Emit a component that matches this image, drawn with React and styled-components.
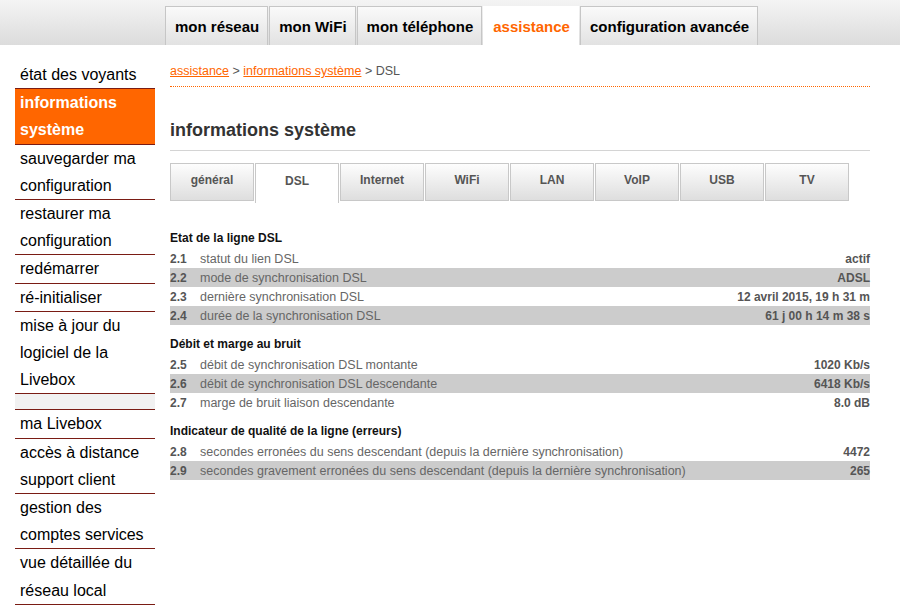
import React from 'react'
import styled, { createGlobalStyle } from 'styled-components'

const Global = createGlobalStyle`
  body {
    margin: 0;
    background: #fff;
    font-family: "Liberation Sans", Arial, sans-serif;
  }
`

const TopBar = styled.div`
  height: 45px;
  background: linear-gradient(#f4f4f4, #dcdcdc);
  display: flex;
  align-items: flex-end;
  padding-left: 165px;
`

const TopTab = styled.div`
  height: 38px;
  margin-right: 1px;
  padding: 0 8px 0 9px;
  display: flex;
  align-items: center;
  font-size: 15px;
  font-weight: bold;
  color: ${p => (p.$active ? '#ff6600' : '#000')};
  background: ${p => (p.$active ? '#fff' : 'linear-gradient(#fafafa, #e2e2e2)')};
  border: 1px solid ${p => (p.$active ? '#fff' : '#c6c6c6')};
  border-bottom: none;
`

const Body = styled.div`
  display: flex;
  align-items: flex-start;
  padding: 16px 0 0 15px;
`

const Side = styled.div`
  width: 140px;
  flex-shrink: 0;
`

const SideItem = styled.div`
  padding-left: 5px;
  font-size: 16px;
  line-height: 27.2px;
  color: ${p => (p.$active ? '#fff' : '#000')};
  font-weight: ${p => (p.$active ? 'bold' : 'normal')};
  background: ${p => (p.$active ? '#ff6600' : '#fff')};
  border-bottom: 1px solid #7a1c14;
`

const SideGap = styled.div`
  height: 15px;
  background: #f1f1f1;
  border-bottom: 1px solid #7a1c14;
`

const Main = styled.div`
  width: 700px;
  margin-left: 15px;
`

const Crumbs = styled.div`
  margin-top: 3px;
  font-size: 12.5px;
  color: #555;
  padding-bottom: 8px;
  border-bottom: 1px dotted #ff6600;
  a {
    color: #ff6600;
    text-decoration: underline;
  }
`

const Title = styled.h1`
  margin: 33px 0 0;
  padding-bottom: 9px;
  font-size: 18px;
  font-weight: bold;
  color: #333;
  border-bottom: 1px solid #d4d4d4;
`

const SubTabs = styled.div`
  display: flex;
  align-items: flex-start;
  margin-top: 12px;
`

const SubTab = styled.div`
  box-sizing: border-box;
  width: 84px;
  height: ${p => (p.$active ? '40px' : '38px')};
  margin-right: 1px;
  display: flex;
  align-items: center;
  justify-content: center;
  padding-bottom: ${p => (p.$active ? '6px' : '4px')};
  font-size: 12px;
  font-weight: bold;
  color: #555;
  border: 1px solid #c8c8c8;
  border-bottom: ${p => (p.$active ? 'none' : '1px solid #c8c8c8')};
  background: ${p => (p.$active ? '#fff' : 'linear-gradient(#fdfdfd, #dedede)')};
`

const Section = styled.div`
  margin-top: ${p => (p.$first ? '25px' : '9px')};
`

const SectionTitle = styled.div`
  font-size: 12px;
  font-weight: bold;
  color: #111;
  line-height: 21px;
`

const Row = styled.div`
  display: flex;
  align-items: center;
  height: 19px;
  font-size: 12px;
  background: ${p => (p.$shade ? '#cccccc' : 'transparent')};
`

const Num = styled.span`
  width: 30px;
  font-weight: bold;
  color: #555;
`

const Label = styled.span`
  flex: 1;
  font-size: 12.5px;
  color: #666;
`

const Value = styled.span`
  font-weight: bold;
  color: #555;
`

const topTabs = ['mon réseau', 'mon WiFi', 'mon téléphone', 'assistance', 'configuration avancée']
const subTabs = ['général', 'DSL', 'Internet', 'WiFi', 'LAN', 'VoIP', 'USB', 'TV']

const sections = [
  {
    title: 'Etat de la ligne DSL',
    rows: [
      ['2.1', 'statut du lien DSL', 'actif'],
      ['2.2', 'mode de synchronisation DSL', 'ADSL'],
      ['2.3', 'dernière synchronisation DSL', '12 avril 2015, 19 h 31 m'],
      ['2.4', 'durée de la synchronisation DSL', '61 j 00 h 14 m 38 s'],
    ],
  },
  {
    title: 'Débit et marge au bruit',
    rows: [
      ['2.5', 'débit de synchronisation DSL montante', '1020 Kb/s'],
      ['2.6', 'débit de synchronisation DSL descendante', '6418 Kb/s'],
      ['2.7', 'marge de bruit liaison descendante', '8.0 dB'],
    ],
  },
  {
    title: 'Indicateur de qualité de la ligne (erreurs)',
    rows: [
      ['2.8', 'secondes erronées du sens descendant (depuis la dernière synchronisation)', '4472'],
      ['2.9', 'secondes gravement erronées du sens descendant (depuis la dernière synchronisation)', '265'],
    ],
  },
]

export default function App() {
  return (
    <>
      <Global />
      <TopBar>
        {topTabs.map(t => (
          <TopTab key={t} $active={t === 'assistance'}>{t}</TopTab>
        ))}
      </TopBar>
      <Body>
        <Side>
          <SideItem>état des voyants</SideItem>
          <SideItem $active>informations système</SideItem>
          <SideItem>sauvegarder ma configuration</SideItem>
          <SideItem>restaurer ma configuration</SideItem>
          <SideItem>redémarrer</SideItem>
          <SideItem>ré-initialiser</SideItem>
          <SideItem>mise à jour du logiciel de la Livebox</SideItem>
          <SideGap />
          <SideItem>ma Livebox</SideItem>
          <SideItem>accès à distance<br />support client</SideItem>
          <SideItem>gestion des comptes services</SideItem>
          <SideItem>vue détaillée du réseau local</SideItem>
        </Side>
        <Main>
          <Crumbs>
            <a>assistance</a> &gt; <a>informations système</a> &gt; DSL
          </Crumbs>
          <Title>informations système</Title>
          <SubTabs>
            {subTabs.map(t => (
              <SubTab key={t} $active={t === 'DSL'}>{t}</SubTab>
            ))}
          </SubTabs>
          {sections.map((s, i) => (
            <Section key={s.title} $first={i === 0}>
              <SectionTitle>{s.title}</SectionTitle>
              {s.rows.map(([n, l, v], j) => (
                <Row key={n} $shade={j % 2 === 1}>
                  <Num>{n}</Num>
                  <Label>{l}</Label>
                  <Value>{v}</Value>
                </Row>
              ))}
            </Section>
          ))}
        </Main>
      </Body>
    </>
  )
}
